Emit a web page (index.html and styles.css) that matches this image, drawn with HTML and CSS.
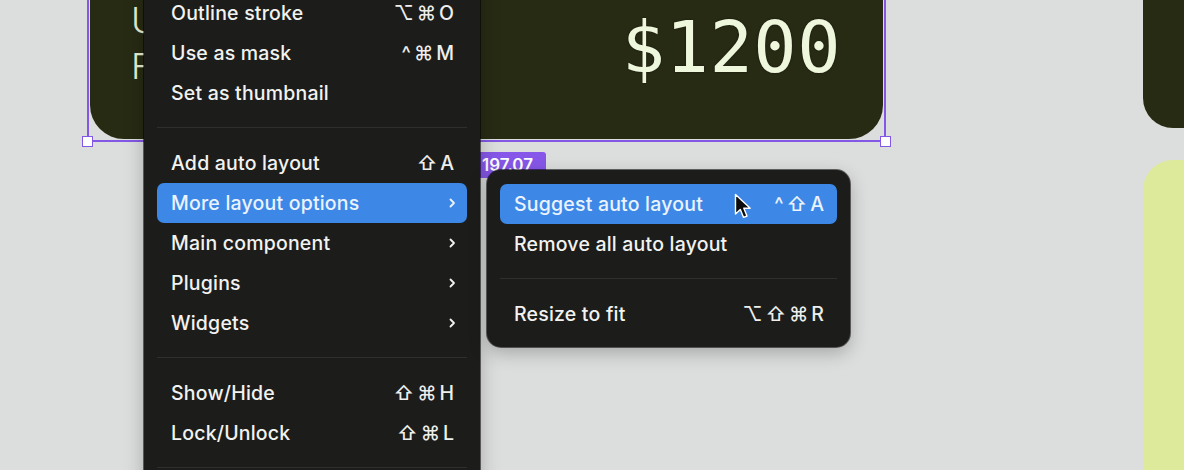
FILE: index.html
```html
<!DOCTYPE html>
<html lang="en">
<head>
<meta charset="UTF-8">
<meta name="viewport" content="width=device-width, initial-scale=1.0">
<title>Canvas context menu</title>
<link rel="stylesheet" href="styles.css">
</head>
<body>
  <div class="canvas">

    <div class="frame">
      <div class="card">
        <div class="card-copy">
          <div>Unlimited</div>
          <div>Free trial</div>
        </div>
        <div class="price">$1200</div>
      </div>
      <span class="handle handle-left"></span>
      <span class="handle handle-right"></span>
    </div>
    <div class="size-badge">197.07</div>

    <div class="side-card side-dark"></div>
    <div class="side-card side-lime"></div>

    <div class="menu main-menu">
      <div class="item"><span>Outline stroke</span><span class="keys">⌥⌘O</span></div>
      <div class="item"><span>Use as mask</span><span class="keys">^⌘M</span></div>
      <div class="item"><span>Set as thumbnail</span></div>
      <div class="sep"></div>
      <div class="item"><span>Add auto layout</span><span class="keys">⇧A</span></div>
      <div class="item active"><span>More layout options</span>
        <svg class="chev" width="7" height="10" viewBox="0 0 7 10"><path d="M1.5 1.5 L5 5 L1.5 8.5"/></svg>
      </div>
      <div class="item"><span>Main component</span>
        <svg class="chev" width="7" height="10" viewBox="0 0 7 10"><path d="M1.5 1.5 L5 5 L1.5 8.5"/></svg>
      </div>
      <div class="item"><span>Plugins</span>
        <svg class="chev" width="7" height="10" viewBox="0 0 7 10"><path d="M1.5 1.5 L5 5 L1.5 8.5"/></svg>
      </div>
      <div class="item"><span>Widgets</span>
        <svg class="chev" width="7" height="10" viewBox="0 0 7 10"><path d="M1.5 1.5 L5 5 L1.5 8.5"/></svg>
      </div>
      <div class="sep"></div>
      <div class="item"><span>Show/Hide</span><span class="keys">⇧⌘H</span></div>
      <div class="item"><span>Lock/Unlock</span><span class="keys">⇧⌘L</span></div>
      <div class="sep"></div>
    </div>

    <div class="menu sub-menu">
      <div class="item active"><span>Suggest auto layout</span><span class="keys">^⇧A</span></div>
      <div class="item"><span>Remove all auto layout</span></div>
      <div class="sep"></div>
      <div class="item"><span>Resize to fit</span><span class="keys">⌥⇧⌘R</span></div>
    </div>

    <svg class="cursor" width="20" height="28" viewBox="0 0 20 28">
      <path d="M1.5 1.5 L1.5 21 L6.3 16.4 L9.6 24.4 L13 23 L9.8 15.2 L16.2 15.2 Z" fill="#0c0c0c" stroke="#ffffff" stroke-width="1.4" stroke-linejoin="round"/>
    </svg>
  </div>
</body>
</html>
```

FILE: styles.css
```css
body, html {
  margin: 0;
  padding: 0;
  height: 100%;
  overflow: hidden;
  font-family: Inter, "Noto Sans", "DejaVu Sans", sans-serif;
}

.canvas {
  position: relative;
  width: 1184px;
  height: 470px;
  background-color: #dcdedd;
  overflow: hidden;
}

/* selected frame on the canvas */
.frame {
  position: absolute;
  left: 87px;
  top: -80px;
  width: 793px;
  height: 219px;
  border: 2px solid #8358e4;
  border-top: none;
  padding: 0 1px 1px;
}

.card {
  height: 100%;
  background-color: #272b14;
  border-radius: 0 0 34px 34px;
  display: flex;
  justify-content: space-between;
  align-items: flex-start;
  padding: 77px 42px 0 41px;
  box-sizing: border-box;
  color: #e8f0d2;
}

/* the copy runs on under the context menu */
.card-copy {
  width: 14px;
  overflow: hidden;
  white-space: nowrap;
  font-size: 36px;
  font-weight: 300;
  line-height: 46px;
}

.price {
  font-family: "DejaVu Sans Mono", "Liberation Mono", monospace;
  font-size: 72px;
  line-height: 72px;
  letter-spacing: 0.5px;
  margin-top: 14px;
  color: #eef6dc;
  text-shadow: 0 0 2px rgba(0, 0, 0, 0.6);
}

.handle {
  position: absolute;
  bottom: -7px;
  width: 9px;
  height: 9px;
  background: #ffffff;
  border: 1.5px solid #8358e4;
}

.handle-left {
  left: -7px;
}

.handle-right {
  right: -7px;
}

.size-badge {
  position: absolute;
  left: 472px;
  top: 152px;
  width: 64px;
  height: 26px;
  padding-left: 10px;
  background-color: #8657e8;
  border-radius: 3px;
  color: #ffffff;
  font-size: 17px;
  font-weight: 600;
  line-height: 26px;
}

.side-card {
  position: absolute;
  left: 1143px;
  width: 80px;
}

.side-dark {
  top: -40px;
  height: 168px;
  background-color: #272b14;
  border-radius: 0 0 0 30px;
}

.side-lime {
  top: 160px;
  height: 340px;
  background-color: #dde99b;
  border-radius: 30px 0 0 0;
}

/* context menus */
.menu {
  position: absolute;
  background-color: #1c1d1b;
  color: #f2f2f0;
  font-size: 19.5px;
  font-weight: 500;
  letter-spacing: 0.2px;
  box-sizing: border-box;
  box-shadow: 0 0 0 1px rgba(0, 0, 0, 0.55), 0 6px 18px rgba(0, 0, 0, 0.25);
}

.main-menu {
  left: 144px;
  top: -20px;
  width: 336px;
  height: 520px;
  padding: 13px;
}

.sub-menu {
  left: 487px;
  top: 170px;
  width: 363px;
  padding: 14px 13px 13px;
  border-radius: 14px;
}

.item {
  height: 40px;
  display: flex;
  align-items: center;
  justify-content: space-between;
  padding: 0 13px 0 14px;
  border-radius: 7px;
  white-space: nowrap;
}

.item.active {
  background-color: #3d88e6;
  color: #eaf3ff;
}

.keys {
  font-family: Inter, "DejaVu Sans", sans-serif;
  letter-spacing: 3px;
  margin-right: -3px;
  color: #eeeeec;
}

.active .keys {
  color: #eaf3ff;
}

.chev {
  fill: none;
  stroke: currentColor;
  stroke-width: 1.8;
  stroke-linecap: round;
  stroke-linejoin: round;
  margin-right: -2px;
}

.sep {
  height: 1px;
  background-color: #2f302d;
  margin: 14px 0 15px;
}

.cursor {
  position: absolute;
  left: 734px;
  top: 193px;
}
```
